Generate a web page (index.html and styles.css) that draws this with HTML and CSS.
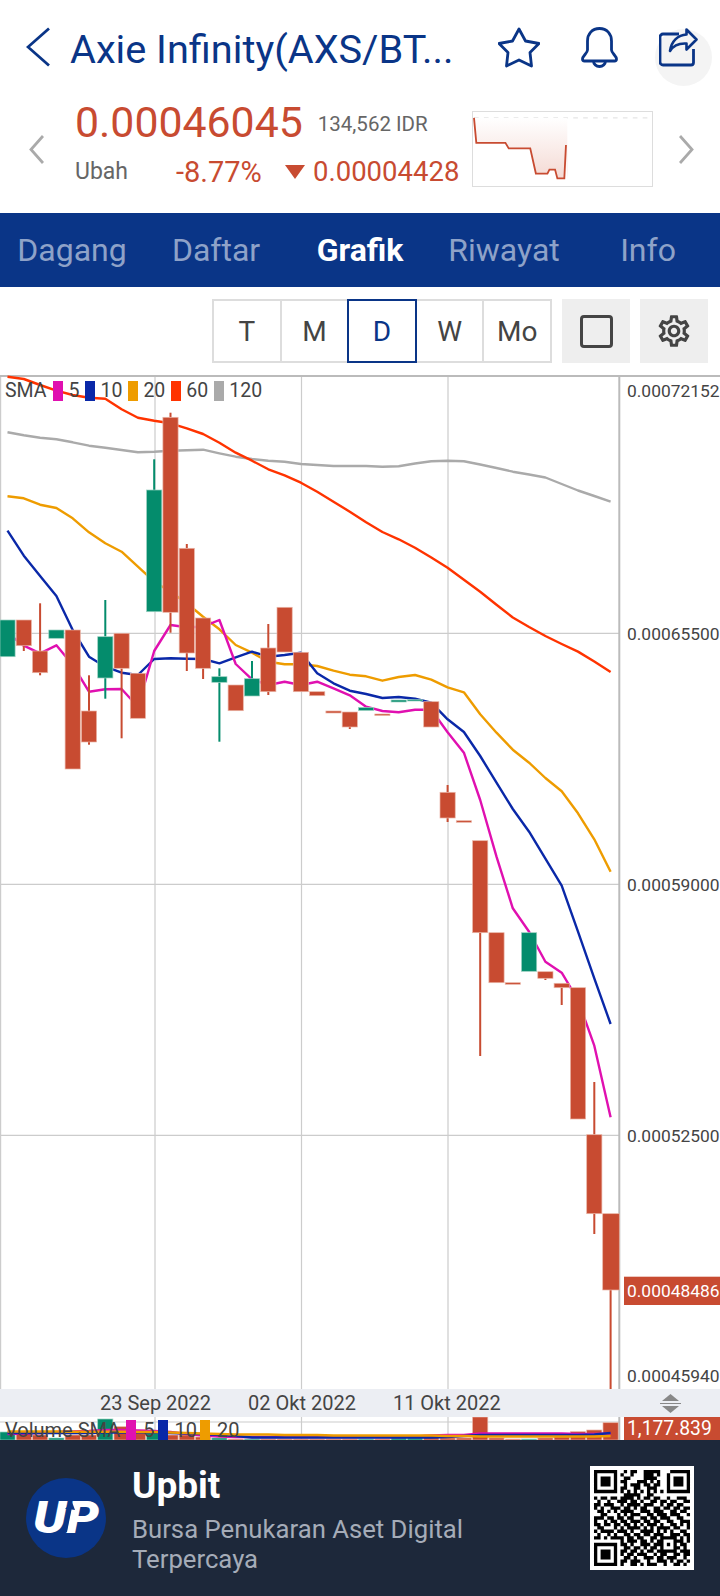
FILE: index.html
```html
<!DOCTYPE html>
<html lang="en">
<head>
    <meta charset="UTF-8">
    <meta name="viewport" content="width=device-width, initial-scale=1.0">
    <title>Axie Infinity (AXS/BTC)</title>
    <link rel="stylesheet" href="styles.css">
</head>
<body>
    <header class="top-bar">
        <svg class="back-icon" viewBox="0 0 25 40"><polyline points="23,1.5 2,20 23,38.5"/></svg>
        <h1 class="coin-title">Axie Infinity(AXS/BT...</h1>
        <div class="top-actions">
            <svg class="star-icon" viewBox="0 0 42 41"><polygon points="21,2 27.5,14 41,16.5 32,25.5 33.5,39 21,33 8.5,39 10,25.5 1,16.5 14.5,14"/></svg>
            <svg class="bell-icon" viewBox="0 0 37 41">
                <path d="M18.5 1.5C11 1.5 6.5 7 6.5 14V23C6.5 26 1.5 29 1.5 32A2 2 0 0 0 3.5 34H33.5A2 2 0 0 0 35.5 32C35.5 29 30.5 26 30.5 23V14C30.5 7 26 1.5 18.5 1.5Z"/>
                <path d="M12.5 34A6 5.5 0 0 0 24.5 34"/>
            </svg>
            <div class="share-wrap">
                <span class="share-ripple"></span>
                <svg class="share-icon" viewBox="0 0 39 39">
                    <path d="M20 6H4a3 3 0 0 0-3 3v25a3 3 0 0 0 3 3h28a2.5 2.5 0 0 0 2.5-2.5V21"/>
                    <path class="share-arrow" d="M27.5 1.5L37.5 11.5L27.5 21.5V15.5C20 15 14 18 11 23C12.5 13 19 7 27.5 6.5Z"/>
                </svg>
            </div>
        </div>
    </header>

    <section class="price-block">
        <svg class="side-arrow" viewBox="0 0 15 29"><polyline points="14,1 2,14.5 14,28"/></svg>
        <div class="price-info">
            <div class="price-row">
                <span class="price">0.00046045</span>
                <span class="price-idr">134,562 IDR</span>
            </div>
            <div class="change-row">
                <span class="change-label">Ubah</span>
                <span class="change-pct">-8.77%</span>
                <span class="down-arrow"></span>
                <span class="change-val">0.00004428</span>
            </div>
        </div>
        <div class="mini-chart">
            <svg viewBox="37 34 541 226" preserveAspectRatio="none">
                <defs>
                    <linearGradient id="miniFill" x1="0" y1="0" x2="0" y2="1">
                        <stop offset="0" stop-color="#ffffff"/>
                        <stop offset="1" stop-color="#f4d9d3"/>
                    </linearGradient>
                </defs>
                <line class="mini-dash" x1="40" y1="52" x2="575" y2="52"/>
                <polygon fill="url(#miniFill)" points="40,52 47,128 135,128 145,145 210,145 227,222 262,222 268,210 285,210 292,237 313,237 318,135 322,240 322,52"/>
                <polyline class="mini-line" points="40,52 47,128 135,128 145,145 210,145 227,222 262,222 268,210 285,210 292,237 313,237 318,135"/>
            </svg>
        </div>
        <svg class="side-arrow side-arrow-right" viewBox="0 0 15 29"><polyline points="1,1 13,14.5 1,28"/></svg>
    </section>

    <nav class="tabs">
        <a href="#">Dagang</a>
        <a href="#">Daftar</a>
        <a href="#" class="active">Grafik</a>
        <a href="#">Riwayat</a>
        <a href="#">Info</a>
    </nav>

    <div class="toolbar">
        <div class="period-group">
            <button class="period">T</button>
            <button class="period">M</button>
            <button class="period selected">D</button>
            <button class="period">W</button>
            <button class="period">Mo</button>
        </div>
        <button class="tool-btn"><span class="square-icon"></span></button>
        <button class="tool-btn">
            <svg class="gear-icon" viewBox="0 0 24 24"><path d="M19.43 12.98c.04-.32.07-.64.07-.98 0-.34-.03-.66-.07-.98l2.11-1.65c.19-.15.24-.42.12-.64l-2-3.46c-.09-.16-.26-.25-.44-.25-.06 0-.12.01-.17.03l-2.49 1c-.52-.4-1.08-.73-1.69-.98l-.38-2.65C14.46 2.18 14.25 2 14 2h-4c-.25 0-.46.18-.49.42l-.38 2.65c-.61.25-1.17.59-1.69.98l-2.49-1c-.06-.02-.12-.03-.18-.03-.17 0-.34.09-.43.25l-2 3.46c-.13.22-.07.49.12.64l2.11 1.65c-.04.32-.07.65-.07.98 0 .33.03.66.07.98l-2.11 1.65c-.19.15-.24.42-.12.64l2 3.46c.09.16.26.25.44.25.06 0 .12-.01.17-.03l2.49-1c.52.4 1.08.73 1.69.98l.38 2.65c.03.24.24.42.49.42h4c.25 0 .46-.18.49-.42l.38-2.65c.61-.25 1.17-.59 1.69-.98l2.49 1c.06.02.12.03.18.03.17 0 .34-.09.43-.25l2-3.46c.12-.22.07-.49-.12-.64l-2.11-1.65zm-1.98-1.71c.04.31.05.52.05.73 0 .21-.02.43-.05.73l-.14 1.13.89.7 1.08.84-.7 1.21-1.27-.51-1.04-.42-.9.68c-.43.32-.84.56-1.25.73l-1.06.43-.16 1.13-.2 1.35h-1.4l-.19-1.35-.16-1.13-1.06-.43c-.43-.18-.83-.41-1.23-.71l-.91-.7-1.06.43-1.27.51-.7-1.21 1.08-.84.89-.7-.14-1.13c-.03-.31-.05-.54-.05-.74s.02-.43.05-.73l.14-1.13-.89-.7-1.08-.84.7-1.21 1.27.51 1.04.42.9-.68c.43-.32.84-.56 1.25-.73l1.06-.43.16-1.13.2-1.35h1.39l.19 1.35.16 1.13 1.06.43c.43.18.83.41 1.23.71l.91.7 1.06-.43 1.27-.51.7 1.21-1.07.85-.89.7.14 1.13zM12 8c-2.21 0-4 1.79-4 4s1.79 4 4 4 4-1.79 4-4-1.79-4-4-4zm0 6c-1.1 0-2-.9-2-2s.9-2 2-2 2 .9 2 2-.9 2-2 2z"/></svg>
        </button>
    </div>

    <div class="chart-panel">
        <svg id="priceChart" class="chart-svg" viewBox="0 375 720 1014" width="720" height="1014"></svg>
        <div class="legend">
            <span class="legend-name">SMA</span>
            <i class="swatch sma5"></i><span>5</span>
            <i class="swatch sma10"></i><span>10</span>
            <i class="swatch sma20"></i><span>20</span>
            <i class="swatch sma60"></i><span>60</span>
            <i class="swatch sma120"></i><span>120</span>
        </div>
    </div>

    <div class="date-bar">
        <span>23 Sep 2022</span>
        <span>02 Okt 2022</span>
        <span>11 Okt 2022</span>
        <svg class="resize-icon" viewBox="0 0 21 19">
            <polygon points="10.5,0 19,7 2,7"/>
            <rect x="0" y="9" width="21" height="1"/>
            <polygon points="10.5,19 19,12 2,12"/>
        </svg>
    </div>

    <div class="volume-panel">
        <svg id="volumeChart" class="chart-svg" viewBox="0 1417 720 23" width="720" height="23"></svg>
        <div class="legend legend-volume">
            <span class="legend-name">Volume SMA</span>
            <i class="swatch sma5"></i><span>5</span>
            <i class="swatch sma10"></i><span>10</span>
            <i class="swatch sma20"></i><span>20</span>
        </div>
    </div>

    <footer class="promo">
        <svg class="promo-logo" viewBox="0 0 80 80">
            <circle cx="40" cy="40" r="40"/>
            <text class="promo-logo-text" x="7" y="55" textLength="66" lengthAdjust="spacingAndGlyphs">UP</text>
            <polygon class="promo-logo-cut" points="37,54 42,31 39,31 46,24 49,32 45.5,31.5 41,54"/>
        </svg>
        <div class="promo-text">
            <div class="promo-name">Upbit</div>
            <div class="promo-desc">Bursa Penukaran Aset Digital Terpercaya</div>
        </div>
        <svg id="qrCode" class="qr" viewBox="-1.2 -1.2 31.4 31.4"></svg>
    </footer>

    <script src="chart.js"></script>
</body>
</html>
```

FILE: styles.css
```css
* {
    box-sizing: border-box;
}

body {
    margin: 0;
    width: 720px;
    height: 1596px;
    overflow: hidden;
    background-color: #fff;
    font-family: Roboto, "Liberation Sans", sans-serif;
    color: #444;
}

/* top bar */
.top-bar {
    display: flex;
    align-items: center;
    height: 94px;
    padding-left: 26px;
}

.back-icon {
    width: 25px;
    height: 40px;
    fill: none;
    stroke: #0a3587;
    stroke-width: 2.8;
}

.coin-title {
    flex: 1;
    margin: 4px 0 0 19px;
    font-size: 39.7px;
    font-weight: 400;
    color: #0a3587;
    white-space: nowrap;
}

.top-actions {
    display: flex;
    align-items: center;
    gap: 41px;
    padding-right: 22px;
}

.star-icon, .bell-icon, .share-icon {
    display: block;
    fill: none;
    stroke: #0a3587;
    stroke-width: 2.8;
    stroke-linejoin: round;
}

.star-icon {
    width: 42px;
    height: 41px;
}

.bell-icon {
    width: 37px;
    height: 41px;
}

.share-wrap {
    position: relative;
    width: 39px;
    height: 39px;
}

.share-icon {
    position: relative;
    width: 39px;
    height: 39px;
}

.share-arrow {
    stroke-width: 2.6;
}

.share-ripple {
    position: absolute;
    left: -4px;
    top: 1px;
    width: 57px;
    height: 57px;
    border-radius: 50%;
    background-color: #f4f4f4;
}

/* price */
.price-block {
    display: flex;
    align-items: center;
    height: 119px;
    padding: 0 0 9px 29px;
}

.side-arrow {
    width: 15px;
    height: 29px;
    fill: none;
    stroke: #aaa;
    stroke-width: 2.8;
}

.side-arrow-right {
    margin-left: 26px;
}

.price-info {
    align-self: flex-start;
    width: 397px;
    margin-left: 31px;
    padding-top: 3px;
}

.price-row {
    display: flex;
    align-items: flex-start;
    height: 50px;
}

.price {
    font-size: 42.8px;
    line-height: 50px;
    color: #c84b31;
}

.price-idr {
    margin: 10px 0 0 15px;
    font-size: 20.5px;
    line-height: 34px;
    color: #666;
}

.change-row {
    display: flex;
    align-items: center;
    height: 36px;
    margin-top: 7px;
    font-size: 27.5px;
    line-height: 36px;
    color: #c84b31;
}

.change-label {
    width: 101px;
    font-size: 23px;
    color: #666;
}

.change-pct {
    width: 109px;
    font-size: 29px;
}

.down-arrow {
    width: 0;
    height: 0;
    margin: 0 8px 0 0;
    border-left: 10.5px solid transparent;
    border-right: 10.5px solid transparent;
    border-top: 14px solid #c84b31;
}

.mini-chart {
    width: 181px;
    height: 76px;
    border: 1px solid #ddd;
}

.mini-chart svg {
    display: block;
    width: 179px;
    height: 74px;
}

.mini-dash {
    stroke: #ddd;
    stroke-width: 3;
    stroke-dasharray: 14 16;
}

.mini-line {
    fill: none;
    stroke: #c84b31;
    stroke-width: 5.5;
}

/* tabs */
.tabs {
    display: grid;
    grid-template-columns: repeat(5, 1fr);
    align-items: center;
    height: 74px;
    background-color: #0a3587;
}

.tabs a {
    text-align: center;
    font-size: 32px;
    color: #8ea2c8;
    text-decoration: none;
}

.tabs a.active {
    font-weight: 700;
    color: #fff;
}

/* period buttons */
.toolbar {
    display: flex;
    gap: 10px;
    height: 88px;
    padding: 12px 0 0 212px;
}

.period-group {
    display: flex;
    width: 340px;
    height: 64px;
    padding-left: 2px;
}

.period {
    position: relative;
    flex: 1;
    margin-left: -2px;
    padding: 0;
    border: 2px solid #ddd;
    background-color: #fff;
    font-family: inherit;
    font-size: 28px;
    color: #444;
}

.period.selected {
    z-index: 1;
    border-color: #0a3587;
    color: #0a3587;
}

.tool-btn {
    display: flex;
    align-items: center;
    justify-content: center;
    width: 68px;
    height: 64px;
    padding: 0;
    border: none;
    background-color: #eee;
}

.square-icon {
    width: 33px;
    height: 33px;
    border: 3px solid #444;
    border-radius: 4px;
}

.gear-icon {
    width: 38px;
    height: 38px;
    fill: #444;
}

/* chart */
.chart-panel {
    position: relative;
    height: 1014px;
}

.chart-svg {
    display: block;
}

.frame-line {
    stroke: #bbb;
    stroke-width: 2;
}

.grid-line {
    stroke: #ccc;
    stroke-width: 1.2;
}

.ma-line {
    fill: none;
    stroke-width: 2.4;
    stroke-linejoin: round;
}

.line-sma5 { stroke: #e010b0; }
.line-sma10 { stroke: #0a28a8; }
.line-sma20 { stroke: #ee9c00; }
.line-sma60 { stroke: #ff3300; }
.line-sma120 { stroke: #aaa; }

.candle-up {
    fill: #048c6c;
    stroke: #9ad0c0;
    stroke-width: 0.7;
}

.candle-down {
    fill: #c84b31;
    stroke: #eab4a6;
    stroke-width: 0.7;
}

.wick-up { fill: #048c6c; }
.wick-down { fill: #c84b31; }

.axis-label {
    font-size: 17.4px;
    fill: #444;
}

.axis-tag {
    fill: #c84b31;
}

.axis-label.on-tag {
    fill: #fff;
}

.axis-label.volume-value {
    font-size: 19.3px;
}

.legend {
    position: absolute;
    left: 5px;
    top: 6px;
    display: flex;
    align-items: center;
    gap: 5.5px;
    height: 20px;
    font-size: 19.5px;
    line-height: 20px;
    color: #444;
}

.legend-name {
    margin-right: 1px;
}

.swatch {
    width: 10px;
    height: 20px;
}

.sma5 { background-color: #e010b0; }
.sma10 { background-color: #0a28a8; }
.sma20 { background-color: #ee9c00; }
.sma60 { background-color: #ff3300; }
.sma120 { background-color: #aaa; }

/* date bar */
.date-bar {
    display: flex;
    align-items: center;
    gap: 37px;
    height: 28px;
    padding-left: 100px;
    background-color: #eceef3;
    font-size: 20px;
}

.resize-icon {
    width: 21px;
    height: 19px;
    margin-left: auto;
    margin-right: 39px;
    fill: #888;
}

/* volume */
.volume-panel {
    position: relative;
    height: 23px;
}

.legend-volume {
    top: 3px;
    gap: 7px;
    font-size: 20px;
}

.legend-volume span {
    margin-right: -4px;
}

.legend-volume .legend-name {
    margin-right: -1px;
}

/* promo footer */
.promo {
    display: flex;
    align-items: center;
    height: 156px;
    padding: 0 26px;
    background-color: #1d283a;
}

.promo-logo {
    flex: none;
    width: 80px;
    height: 80px;
    fill: #0a3587;
}

.promo-logo-text {
    font-size: 44px;
    font-weight: 900;
    font-style: italic;
    fill: #fff;
}

.promo-logo-cut {
    fill: #0a3587;
}

.promo-text {
    flex: 1;
    margin: 1px 0 0 26px;
}

.promo-name {
    font-size: 37px;
    font-weight: 700;
    line-height: 44px;
    color: #fff;
}

.promo-desc {
    max-width: 420px;
    margin-top: 6px;
    font-size: 25.7px;
    line-height: 30px;
    color: #a5acb8;
}

.qr {
    flex: none;
    width: 104px;
    height: 104px;
    background-color: #fff;
    fill: #000;
}
```

FILE: chart.js
```js
// x position of candle number i
function cx(i) {
    return 7.5 + 16.3 * i;
}

// [body top, body bottom, wick top, wick bottom, up or down]
var candles = [
    [620, 656.7, 0, 0, "up"],
    [620, 645.7, 0, 651, "down"],
    [651, 672.7, 603.3, 675.3, "down"],
    [630, 638.3, 0, 0, "up"],
    [630, 769, 0, 0, "down"],
    [711, 742, 675.3, 744.7, "down"],
    [636.7, 678, 600, 698.7, "up"],
    [633.3, 668.3, 0, 738.3, "down"],
    [673.3, 718.3, 0, 0, "down"],
    [490, 611.7, 459.3, 0, "up"],
    [417.3, 612.3, 412.7, 632.7, "down"],
    [548.3, 653, 544, 671, "down"],
    [618, 668.3, 0, 679, "down"],
    [676.7, 682.3, 668.3, 741.7, "up"],
    [685, 710.7, 0, 0, "down"],
    [678.7, 696, 661, 0, "up"],
    [648, 691.7, 624, 695, "down"],
    [607.3, 652, 0, 0, "down"],
    [652.3, 691.7, 0, 0, "down"],
    [691.7, 695.7, 0, 0, "down"],
    [711, 713, 0, 0, "down"],
    [712, 727, 0, 729, "down"],
    [707.5, 710.5, 0, 0, "up"],
    [714, 715.5, 0, 0, "down"],
    [700, 702, 0, 0, "up"],
    [699.7, 701, 0, 0, "up"],
    [701.7, 727, 0, 0, "down"],
    [792.3, 818, 785, 822, "down"],
    [820.7, 822.3, 0, 0, "down"],
    [840.7, 932.7, 0, 1056, "down"],
    [932.7, 982.7, 0, 0, "down"],
    [982.7, 984.3, 0, 0, "down"],
    [932.7, 971.3, 0, 0, "up"],
    [971.7, 978.3, 0, 980, "down"],
    [983.3, 987.7, 0, 1005, "down"],
    [987.7, 1119, 0, 0, "down"],
    [1134.7, 1213.7, 1082, 1234, "down"],
    [1213.7, 1290, 0, 1389, "down"]
];

// moving averages, one y for each candle
var lines = {
    sma120: [432.3, 435.3, 437.7, 439.3, 442.3, 445.7, 447.7, 450, 452.3, 451.7, 450.7, 450.3, 449.7, 453.3, 456.7, 459, 460.7, 461.7, 464, 465, 466, 466, 466, 466.7, 466.3, 463.5, 461.3, 460.7, 461.3, 464.5, 468, 471.7, 474.5, 477.5, 484, 490.5, 496, 501.7],
    sma60: [376.7, 379, 385, 390.7, 395, 397.7, 398.7, 409.3, 417.7, 420.7, 423.3, 428.3, 434, 442.7, 452.7, 460.7, 469.3, 475.3, 482.7, 491.7, 501.7, 511.7, 522.3, 532, 539.3, 547.8, 557.5, 567.7, 579.7, 591.8, 604.8, 617.5, 627, 636, 644, 651.6, 661.5, 672],
    sma20: [496.3, 498.3, 504.7, 508, 518.3, 532.3, 543.3, 551.7, 566.7, 581.7, 591.7, 603.3, 616.7, 629.3, 645, 652.7, 661.7, 664.3, 664.3, 666, 670.7, 674.7, 676.3, 680.7, 677, 675, 679.7, 687.3, 692.3, 714.3, 732.7, 749.7, 762.7, 778, 791.3, 813.3, 839.3, 871.7],
    sma10: [530.7, 555.7, 576, 596, 630, 656.7, 666.7, 672.7, 675, 659, 658.3, 658.7, 659, 663.3, 657.3, 651.7, 656.7, 655, 652.7, 673.3, 683.3, 690.7, 694, 698, 697, 698.7, 702.7, 719.3, 732, 756, 782.7, 809, 831.7, 858.7, 885.7, 931.7, 978.3, 1024],
    sma5: [633, 645.7, 653.3, 645.3, 665, 691.7, 689.3, 689, 706.7, 651, 625, 627.3, 626.7, 620, 664, 679.3, 685, 681.7, 685, 681.7, 688.3, 695.3, 706.7, 711, 712.3, 709.7, 709.7, 732.3, 752.7, 800, 856.7, 908.3, 931.7, 961.7, 972.7, 1000, 1045.7, 1117.3]
};

// top of each volume bar
var volumes = [1432, 1433, 1435, 1438, 1435, 1435, 1419, 1426.7, 1430, 1432, 1435, 1435, 1437, 1438, 1439, 1439, 1439, 1439, 1439, 1439, 1439, 1439, 1439, 1439, 1438, 1438, 1435, 1438, 1438, 1417, 1438, 1439, 1439, 1438, 1437, 1431.7, 1430, 1422.7];

var volumeLines = {
    sma5: [1434, 1433.5, 1433, 1432, 1431.5, 1431, 1430, 1430, 1430.5, 1431, 1432, 1434, 1435.5, 1436.5, 1437, 1437, 1437, 1437, 1437, 1437, 1437, 1437, 1437, 1437, 1437, 1436.5, 1435.5, 1435, 1435, 1433.5, 1433.5, 1433.5, 1433.5, 1433.5, 1433.5, 1434, 1434, 1433.5],
    sma10: [1433, 1433, 1433, 1433, 1433, 1433, 1432.5, 1432.5, 1432.5, 1432.5, 1433, 1433.5, 1434, 1435, 1436, 1437.5, 1437.5, 1437.5, 1437.5, 1437.5, 1437.5, 1437.5, 1437.5, 1437.5, 1437.5, 1437.5, 1437.5, 1437, 1436, 1435, 1435, 1435, 1435, 1435, 1435, 1435, 1434.5, 1433],
    sma20: [1431.5, 1431.5, 1431.5, 1431.5, 1431.7, 1431.7, 1431.7, 1431.7, 1432, 1432, 1432.5, 1433, 1433.5, 1434, 1434.5, 1434.5, 1434.5, 1435, 1435, 1435, 1435.5, 1435.5, 1435.5, 1435.5, 1435.5, 1435.5, 1435.5, 1436, 1436, 1436.5, 1436.5, 1436.5, 1436.5, 1436.5, 1436.5, 1436.5, 1436.5, 1436]
};

// rows of the qr code
var qrRows = [
    "11111110010110011111000111111",
    "10000010100100011101000100000".slice(0, 22) + "1000001",
    "10111010011000011110001011101",
    "10111010110001110101001011101",
    "10111010010111011011001011101",
    "10000010110011001110001000001",
    "11111110101010101010101111111",
    "00000000011111001100000000000",
    "10110110111101011011001001110",
    "01001001110110100110110110011",
    "11011100101111011100101101100",
    "10100111011010110011011011011",
    "01101010111100111011100110110",
    "00110001010111001101110111001",
    "11101101101100110110111001100",
    "10010110110111011011001100111",
    "11011011011010101110100110101",
    "01100010101111010101111011001",
    "10111101110100111101010100110",
    "01001010011011011011100111011",
    "11010111101101100110111110101",
    "00000000101110110101100011101",
    "11111110110100111011101010110",
    "10000010011011010110100011010",
    "10111010110110101101111110111",
    "10111010101101110010110011011",
    "10111010011010011101101110010",
    "10000010110111001001110101101",
    "11111110100110101110010011010"
];

var SVG_NS = "http://www.w3.org/2000/svg";

function add(svg, tag, attrs, text) {
    var el = document.createElementNS(SVG_NS, tag);
    for (var key in attrs) {
        el.setAttribute(key, attrs[key]);
    }
    if (text) {
        el.textContent = text;
    }
    svg.appendChild(el);
    return el;
}

function drawLine(svg, name, ys) {
    var points = ys.map(function (y, i) {
        return cx(i).toFixed(1) + "," + y;
    }).join(" ");
    add(svg, "polyline", { "class": "ma-line line-" + name, points: points });
}

function drawCandle(svg, c, i) {
    var left = cx(i) - 7.6;
    var width = 15.2;
    if (i == 0) {
        left = 0;
        width = cx(0) + 7.6;
    }
    if (i == 37) {
        left = 602.7;
        width = 16.6;
    }
    var wickX = cx(i) - 1;
    if (c[2]) {
        add(svg, "rect", { "class": "wick-" + c[4], x: wickX, y: c[2], width: 2, height: c[0] - c[2] });
    }
    if (c[3]) {
        add(svg, "rect", { "class": "wick-" + c[4], x: wickX, y: c[1], width: 2, height: c[3] - c[1] });
    }
    add(svg, "rect", { "class": "candle-" + c[4], x: left, y: c[0], width: width, height: c[1] - c[0] });
}

function drawPriceChart() {
    var svg = document.getElementById("priceChart");
    [155, 301.5, 448].forEach(function (x) {
        add(svg, "line", { "class": "grid-line", x1: x, y1: 375, x2: x, y2: 1389 });
    });
    [633.3, 884.3, 1135.3].forEach(function (y) {
        add(svg, "line", { "class": "grid-line", x1: 0, y1: y, x2: 619, y2: y });
    });
    add(svg, "line", { "class": "grid-line", x1: 0.6, y1: 375, x2: 0.6, y2: 1389 });
    add(svg, "line", { "class": "frame-line", x1: 619.3, y1: 375, x2: 619.3, y2: 1389 });
    add(svg, "line", { "class": "frame-line", x1: 0, y1: 376, x2: 720, y2: 376 });

    for (var name in lines) {
        drawLine(svg, name, lines[name]);
    }
    candles.forEach(function (c, i) {
        drawCandle(svg, c, i);
    });

    var labels = [[396.8, "0.00072152"], [639.5, "0.00065500"], [890.5, "0.00059000"], [1141.5, "0.00052500"], [1381.8, "0.00045940"]];
    labels.forEach(function (l) {
        add(svg, "text", { "class": "axis-label", x: 627, y: l[0] }, l[1]);
    });
    add(svg, "rect", { "class": "axis-tag", x: 624, y: 1276.7, width: 96, height: 28.3 });
    add(svg, "text", { "class": "axis-label on-tag", x: 627, y: 1297 }, "0.00048486");
}

function drawVolumeChart() {
    var svg = document.getElementById("volumeChart");
    [155, 301.5, 448].forEach(function (x) {
        add(svg, "line", { "class": "grid-line", x1: x, y1: 1417, x2: x, y2: 1440 });
    });
    add(svg, "line", { "class": "grid-line", x1: 0, y1: 1422, x2: 619, y2: 1422 });
    add(svg, "line", { "class": "frame-line", x1: 619.3, y1: 1417, x2: 619.3, y2: 1440 });

    volumes.forEach(function (top, i) {
        var kind = candles[i][4];
        add(svg, "rect", { "class": "candle-" + kind, x: cx(i) - 7.6, y: top, width: 15.2, height: 1440 - top });
    });
    for (var name in volumeLines) {
        drawLine(svg, name, volumeLines[name]);
    }
    add(svg, "rect", { "class": "axis-tag", x: 624, y: 1417, width: 96, height: 23 });
    add(svg, "text", { "class": "axis-label on-tag volume-value", x: 627, y: 1435 }, "1,177.839");
}

function drawQr() {
    var svg = document.getElementById("qrCode");
    var d = "";
    qrRows.forEach(function (row, y) {
        for (var x = 0; x < 29; x++) {
            if (row[x] == "1") {
                d += "M" + x + " " + y + "h1v1h-1z";
            }
        }
    });
    add(svg, "path", { d: d });
}

drawPriceChart();
drawVolumeChart();
drawQr();
```
